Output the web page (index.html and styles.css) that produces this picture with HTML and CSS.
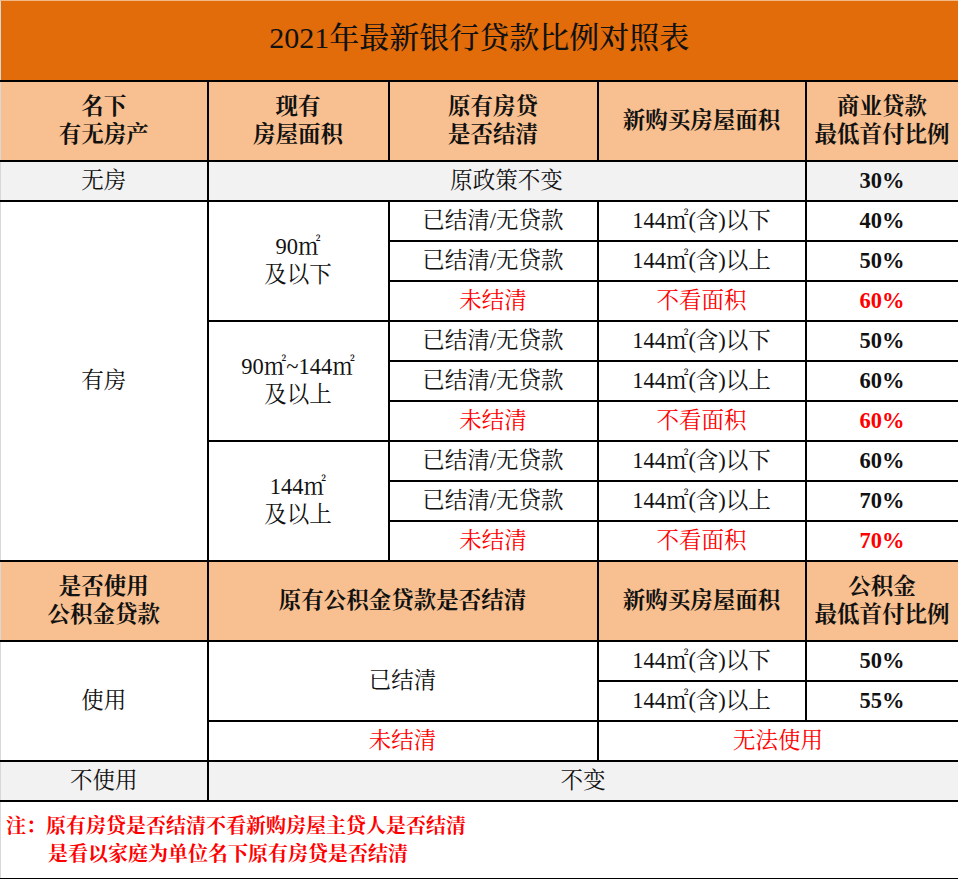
FILE: index.html
```html
<!DOCTYPE html>
<html lang="zh-CN">
<head>
<meta charset="utf-8">
<title>2021年最新银行贷款比例对照表</title>
<link rel="stylesheet" href="styles.css">
</head>
<body>
<table class="sheet">
  <colgroup>
    <col class="c1"><col class="c2"><col class="c3"><col class="c4"><col class="c5">
  </colgroup>
  <tr class="r-title"><td colspan="5" class="title l">2021年最新银行贷款比例对照表</td></tr>
  <tr class="r-head">
    <td class="head l">名下<br>有无房产</td>
    <td class="head">现有<br>房屋面积</td>
    <td class="head">原有房贷<br>是否结清</td>
    <td class="head">新购买房屋面积</td>
    <td class="head">商业贷款<br>最低首付比例</td>
  </tr>
  <tr class="r-row grey">
    <td class="l">无房</td>
    <td colspan="3">原政策不变</td>
    <td class="pct">30%</td>
  </tr>
  <tr class="r-row">
    <td rowspan="9" class="l">有房</td>
    <td rowspan="3">90㎡<br>及以下</td>
    <td>已结清/无贷款</td>
    <td>144㎡(含)以下</td>
    <td class="pct">40%</td>
  </tr>
  <tr class="r-row">
    <td>已结清/无贷款</td>
    <td>144㎡(含)以上</td>
    <td class="pct">50%</td>
  </tr>
  <tr class="r-row red">
    <td>未结清</td>
    <td>不看面积</td>
    <td class="pct">60%</td>
  </tr>
  <tr class="r-row">
    <td rowspan="3">90㎡~144㎡<br>及以上</td>
    <td>已结清/无贷款</td>
    <td>144㎡(含)以下</td>
    <td class="pct">50%</td>
  </tr>
  <tr class="r-row">
    <td>已结清/无贷款</td>
    <td>144㎡(含)以上</td>
    <td class="pct">60%</td>
  </tr>
  <tr class="r-row red">
    <td>未结清</td>
    <td>不看面积</td>
    <td class="pct">60%</td>
  </tr>
  <tr class="r-row">
    <td rowspan="3">144㎡<br>及以上</td>
    <td>已结清/无贷款</td>
    <td>144㎡(含)以下</td>
    <td class="pct">60%</td>
  </tr>
  <tr class="r-row">
    <td>已结清/无贷款</td>
    <td>144㎡(含)以上</td>
    <td class="pct">70%</td>
  </tr>
  <tr class="r-row red">
    <td>未结清</td>
    <td>不看面积</td>
    <td class="pct">70%</td>
  </tr>
  <tr class="r-head">
    <td class="head l">是否使用<br>公积金贷款</td>
    <td class="head" colspan="2">原有公积金贷款是否结清</td>
    <td class="head">新购买房屋面积</td>
    <td class="head">公积金<br>最低首付比例</td>
  </tr>
  <tr class="r-row">
    <td rowspan="3" class="l">使用</td>
    <td rowspan="2" colspan="2">已结清</td>
    <td>144㎡(含)以下</td>
    <td class="pct">50%</td>
  </tr>
  <tr class="r-row">
    <td>144㎡(含)以上</td>
    <td class="pct">55%</td>
  </tr>
  <tr class="r-row red">
    <td colspan="2">未结清</td>
    <td colspan="2">无法使用</td>
  </tr>
  <tr class="r-row grey">
    <td class="l">不使用</td>
    <td colspan="4">不变</td>
  </tr>
  <tr class="r-note">
    <td colspan="5" class="note l">
      <div class="note-line">注：原有房贷是否结清不看新购房屋主贷人是否结清</div>
      <div class="note-line indent">是看以家庭为单位名下原有房贷是否结清</div>
    </td>
  </tr>
</table>
</body>
</html>
```

FILE: styles.css
```css
html, body {
  margin: 0;
  padding: 0;
  background: #ffffff;
}

.sheet {
  width: 958px;
  border-collapse: collapse;
  table-layout: fixed;
  font-family: "Liberation Serif", "Noto Serif CJK SC", "Noto Sans CJK SC", serif;
  color: #111111;
}

.c1 { width: 207px; }
.c2 { width: 181px; }
.c3 { width: 209px; }
.c4 { width: 208px; }
.c5 { width: 153px; }

.sheet td {
  border: 2px solid #000000;
  text-align: center;
  vertical-align: middle;
  padding: 0;
  font-size: 22.5px;
  line-height: 28px;
}

.sheet td.l {
  border-left: 1px solid #d8d8d8;
}

.r-title { height: 80px; }
.r-head { height: 80px; }
.r-row { height: 40px; }
.r-note { height: 78px; }

.sheet .title {
  background: #e26b0a;
  font-size: 30px;
  line-height: 34px;
  font-weight: 500;
  color: #111111;
  border-top: 1px solid #efb98a;
  padding-bottom: 4px;
}

.head {
  background: #f8c090;
  font-weight: 700;
}

.grey td {
  background: #f2f2f2;
}

.pct {
  font-weight: 700;
}

.red td {
  color: #ff0000;
}

.sheet .note {
  text-align: left;
  color: #ff0000;
  font-size: 20px;
  font-weight: 700;
  padding-left: 5px;
}

.note-line.indent {
  padding-left: 42px;
}
```
